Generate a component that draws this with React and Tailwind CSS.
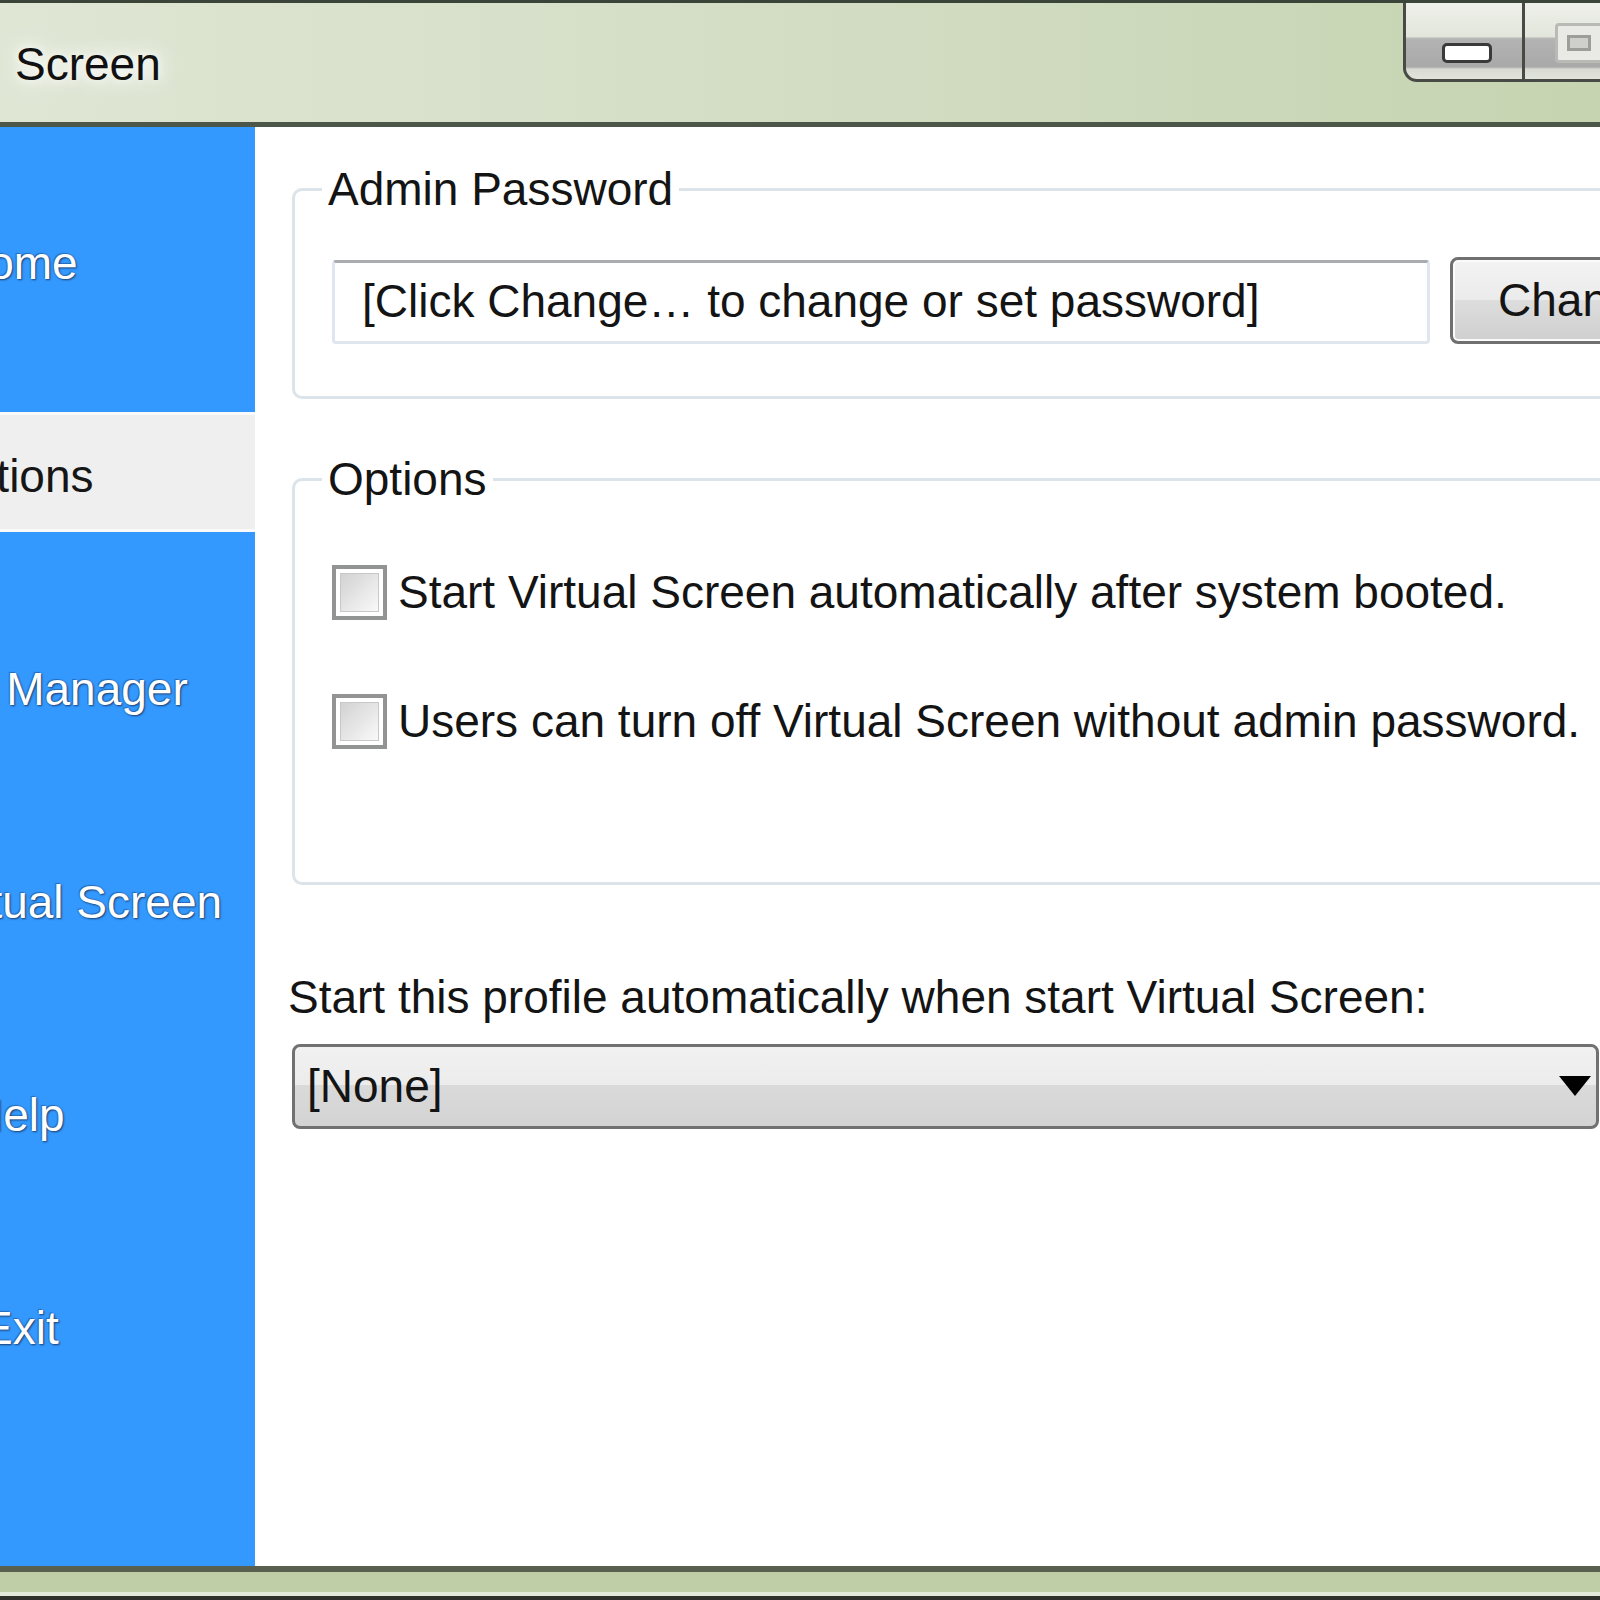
import React from "react";

const sideItems = [
  { label: "Home", offset: "ml-[-45px]" },
  { label: "Options", offset: "ml-[-65px]", active: true },
  { label: "Profile Manager", offset: "ml-[-137px]" },
  { label: "Virtual Screen", offset: "ml-[-66px]" },
  { label: "Help", offset: "ml-[-30px]" },
  { label: "Exit", offset: "ml-[-18px]" },
];

const CheckRow = ({ text }) => (
  <label className="flex items-center gap-[11px] whitespace-nowrap">
    <span className="w-[55px] h-[55px] flex-shrink-0 border-[4px] border-[#929393] bg-white p-[4px] flex">
      <span className="flex-1 border border-[#c8c8c8] bg-gradient-to-br from-[#d2d2d2] to-[#f9f9f9]" />
    </span>
    <span>{text}</span>
  </label>
);

export default function App() {
  return (
    <div className="w-[1600px] h-[1600px] overflow-hidden flex flex-col bg-white font-['Liberation_Sans',Arial,sans-serif] text-[46px] leading-[1.15] text-[#141414]">
      {/* Title bar */}
      <div className="h-[127px] flex-shrink-0 flex items-start border-t-[3px] border-b-[5px] border-t-[#3b4438] border-b-[#4d5749] bg-gradient-to-r from-[#dfe6d4] via-[#d3ddc4] to-[#c6d4b1]">
        <div className="mt-[38px] pl-[15px] leading-none text-[#111] [text-shadow:0_0_10px_#ffffff,0_0_22px_#ffffff,0_0_30px_#f4f7ef]">
          Screen
        </div>

        {/* Window buttons */}
        <div className="ml-auto flex w-[197px] h-[79px]">
          <div className="w-[119px] flex-shrink-0 border-l-[3px] border-b-[3px] border-[#474a45] rounded-bl-[14px] bg-[linear-gradient(to_bottom,#eef0ea_0%,#e3e6dc_44%,#b3b3b3_47%,#a9a9a9_84%,#d9dbd2_87%,#e2e4dc_100%)] flex items-start pt-[40px] pl-[36px]">
            <div className="w-[50px] h-[20px] rounded-[5px] border-[3px] border-[#3a3a3a] bg-white" />
          </div>
          <div className="flex-1 border-l-[3px] border-b-[3px] border-[#474a45] bg-[linear-gradient(to_bottom,#eef0ea_0%,#e3e6dc_44%,#b3b3b3_47%,#a9a9a9_84%,#d9dbd2_87%,#e2e4dc_100%)] flex items-start pt-[20px] pl-[30px]">
            <div className="w-[60px] h-[40px] rounded-[4px] border-[3px] border-[#b9bab6] bg-[#e9eae6] flex items-center pl-[9px]">
              <div className="w-[24px] h-[16px] border-[3px] border-[#9d9e9a] bg-[#cfd0cc]" />
            </div>
          </div>
        </div>
      </div>

      {/* Body */}
      <div className="flex-1 flex min-h-0">
        {/* Sidebar */}
        <div className="w-[255px] flex-shrink-0 bg-[#3399ff] overflow-hidden flex flex-col gap-[93px] pt-[72px]">
          {sideItems.map((item) =>
            item.active ? (
              <div
                key={item.label}
                className="h-[120px] flex items-center whitespace-nowrap bg-[#efefef] border-y-[3px] border-[#fafafa] text-[#161616]"
              >
                <span className={item.offset + " pt-[8px]"}>{item.label}</span>
              </div>
            ) : (
              <div
                key={item.label}
                className="h-[120px] flex items-center whitespace-nowrap text-white [text-shadow:1px_1px_2px_rgba(20,30,60,0.75),-1px_-1px_1px_rgba(20,30,60,0.35)]"
              >
                <span className={item.offset + " pt-[8px]"}>{item.label}</span>
              </div>
            )
          )}
        </div>

        {/* Content */}
        <div className="flex-1 min-w-0 overflow-hidden pl-[37px]">
          <div className="w-[1500px]">
            {/* Admin Password */}
            <fieldset className="mt-[36px] border-[3px] border-[#dce3e9] rounded-[10px] pl-[37px] pt-[41px] pb-[52px]">
              <legend className="ml-[-10px] px-[6px]">Admin Password</legend>
              <div className="flex items-end gap-[20px]">
                <div className="w-[1098px] h-[84px] flex items-center rounded-[4px] border-[3px] border-[#dfe6ee] border-t-[#a9adb2] bg-white pl-[27px] whitespace-nowrap">
                  [Click Change… to change or set password]
                </div>
                <div className="w-[260px] h-[87px] rounded-[8px] border-[3px] border-[#707070] bg-[linear-gradient(to_bottom,#f3f3f3_0%,#ebebeb_50%,#dddddd_50%,#cfcfcf_100%)] shadow-[inset_0_0_0_2px_#fbfbfb] flex items-center pl-[45px] whitespace-nowrap">
                  Change...
                </div>
              </div>
            </fieldset>

            {/* Options */}
            <fieldset className="mt-[54px] border-[3px] border-[#dce3e9] rounded-[10px] pl-[37px] pt-[59px] pb-[133px]">
              <legend className="ml-[-10px] px-[6px]">Options</legend>
              <div className="flex flex-col gap-[74px]">
                <CheckRow text="Start Virtual Screen automatically after system booted." />
                <CheckRow text="Users can turn off Virtual Screen without admin password." />
              </div>
            </fieldset>

            <div className="mt-[86px] ml-[-4px] whitespace-nowrap">
              Start this profile automatically when start Virtual Screen:
            </div>

            <div className="mt-[20px] w-[1307px] h-[85px] rounded-[8px] border-[3px] border-[#717171] bg-[linear-gradient(to_bottom,#f1f1f1_0%,#ececec_48%,#dadada_48%,#d3d3d3_100%)] flex items-center pl-[12px] pr-[5px]">
              <span className="flex-1">[None]</span>
              <svg width="32" height="20" viewBox="0 0 32 20" className="flex-shrink-0">
                <polygon points="0,0 32,0 16,20" fill="#000000" />
              </svg>
            </div>
          </div>
        </div>
      </div>

      {/* Bottom frame */}
      <div className="h-[34px] flex-shrink-0 flex flex-col border-t-[6px] border-[#59604f]">
        <div className="h-[20px] bg-[#bfcea7]" />
        <div className="h-[4px] bg-[#e3e9d8]" />
        <div className="h-[4px] bg-[#2e312b]" />
      </div>
    </div>
  );
}
